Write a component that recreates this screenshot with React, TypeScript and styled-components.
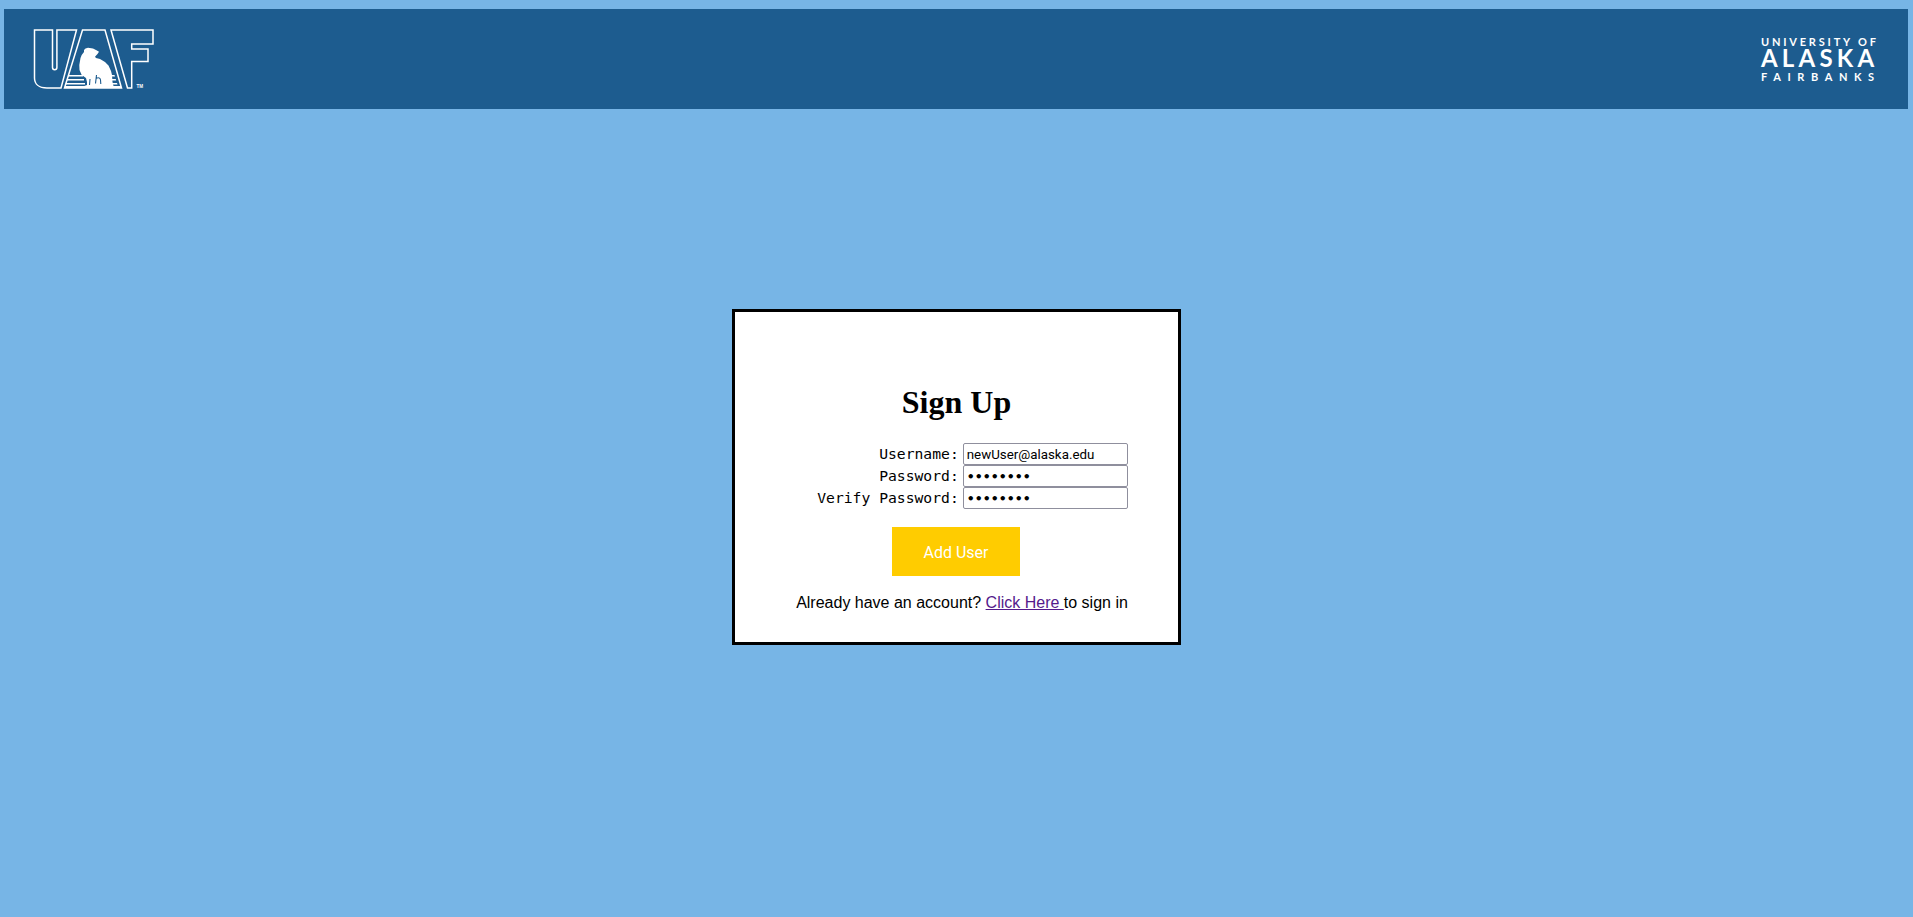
import styled, { createGlobalStyle } from "styled-components";

const GlobalStyle = createGlobalStyle`
	html, body {
		margin: 0;
		padding: 0;
		background-color: #77b5e6;
	}
	body {
		padding: 9px 5px 0 4px;
		min-height: 908px;
		font-family: "Liberation Sans", Arial, sans-serif;
	}
`;

const Header = styled.header`
	height: 100px;
	background-color: #1d5c8f;
	display: flex;
	align-items: center;
	justify-content: space-between;
	padding: 0 31px 0 30px;
`;

const UafLogo = styled.svg`
	width: 130px;
	height: 58px;
	display: block;
	flex: none;
	overflow: visible;
`;

const AlaskaLogo = styled.div`
	width: 116px;
	display: flex;
	flex-direction: column;
	color: #ffffff;
	font-family: Lato, "Open Sans", sans-serif;
	white-space: nowrap;
`;

const LogoSmallLine = styled.span<{ $spacing: number }>`
	font-size: 11px;
	line-height: 13px;
	font-weight: 700;
	letter-spacing: ${(p) => p.$spacing}px;
`;

const LogoBigLine = styled.span`
	font-size: 24px;
	line-height: 20px;
	font-weight: 700;
	letter-spacing: 4.2px;
	margin-bottom: 2px;
`;

const Main = styled.main`
	display: flex;
	justify-content: center;
	padding-top: 200px;
`;

const Card = styled.section`
	width: 449px;
	height: 336px;
	box-sizing: border-box;
	border: 3px solid #000000;
	background-color: #ffffff;
	padding-top: 72px;
	display: flex;
	flex-direction: column;
	align-items: center;
`;

const Title = styled.h1`
	margin: 0 0 22px 1px;
	font-family: "Liberation Serif", "Times New Roman", serif;
	font-size: 32px;
	line-height: 37px;
	font-weight: 700;
	color: #000000;
`;

const FormGrid = styled.form`
	display: grid;
	grid-template-columns: auto 165px;
	grid-auto-rows: 22px;
	column-gap: 4px;
	align-items: center;
	margin-left: 33px;
`;

const FieldLabel = styled.label`
	font-family: "DejaVu Sans Mono", "Liberation Mono", monospace;
	font-size: 14.7px;
	line-height: 20px;
	padding-bottom: 1px;
	color: #000000;
	text-align: right;
	white-space: pre;
`;

const FieldInput = styled.input`
	width: 165px;
	height: 22px;
	box-sizing: border-box;
	border: 1px solid #8f8f9d;
	border-radius: 2px;
	padding: 0 3px;
	margin: 0;
	background-color: #ffffff;
	color: #000000;
	font-family: Roboto, Arial, sans-serif;
	font-size: 13.33px;
	outline: none;

	&[type="password"] {
		font-family: "DejaVu Sans", sans-serif;
		font-size: 12.5px;
		font-weight: 700;
	}
`;

const SubmitButton = styled.button`
	width: 128px;
	height: 49px;
	margin-top: 18px;
	border: none;
	padding: 1px 0 0;
	background-color: #ffcc00;
	color: #ffffff;
	font-family: Roboto, sans-serif;
	font-size: 16px;
`;

const FooterText = styled.p`
	margin: 18px 0 0 12px;
	font-size: 16px;
	line-height: 18px;
	color: #000000;
	white-space: pre;
`;

const VisitedLink = styled.a`
	color: #551a8b;
	text-decoration: underline;
`;

function BearMark() {
	return (
		<UafLogo viewBox="0 0 130 58" aria-label="UAF">
			<g transform="translate(-34 -30)">
				<g fill="none" stroke="#ffffff" strokeWidth="1.5" strokeLinejoin="miter">
					<path d="M34.5 30H52.5V67.5a2.2 2.2 0 0 0 4.4 0V30H76.5L61 88H47C39 88 34.5 84 34.5 78Z" />
					<path d="M82.5 30H105L121.5 88H64.5Z" />
					<path d="M111 30H153V44H131.7V49H148V61.5H131.7V88H127.5Z" />
				</g>
				<g fill="#ffffff">
					<path d="M68.5 75H83V76.6H68ZM67.3 79H84V80.6H66.8ZM66 83H85V84.6H65.6Z" />
					<path d="M110 75H114.5L115 76.6H110ZM110 79H115.7L116.2 80.6H110ZM110 83H117L117.5 84.6H110Z" />
					<path d="M65 86H121V88H65Z" />
					<path d="M84 50 85.5 48.5 88 47.7 93 48.5 96 50 99 51.7 97.5 54 95 56.7 96 58 100 59 105 62 108.5 65.5 111 71 112 75 112.5 82 114 88H80L83 86.5 87 85 87 82 86 78 81.7 75 79.5 70 79.3 65 80.5 58 81.7 55 84 52Z" />
				</g>
				<path d="M96.5 75 95.5 83.5M96 78.5C98.5 77 100.5 78 100.5 80L100.8 84M90 79 89.5 85" fill="none" stroke="#1d5c8f" strokeWidth="1.1" />
				<text x="136.5" y="88" fill="#ffffff" fontFamily="Liberation Sans, sans-serif" fontSize="4.6" fontWeight="700">TM</text>
			</g>
		</UafLogo>
	);
}

export default function App() {
	return (
		<>
			<GlobalStyle />
			<Header>
				<BearMark />
				<AlaskaLogo>
					<LogoSmallLine $spacing={2.8}>UNIVERSITY OF</LogoSmallLine>
					<LogoBigLine>ALASKA</LogoBigLine>
					<LogoSmallLine $spacing={6.6}>FAIRBANKS</LogoSmallLine>
				</AlaskaLogo>
			</Header>
			<Main>
				<Card>
					<Title>Sign Up</Title>
					<FormGrid>
						<FieldLabel htmlFor="username">Username:</FieldLabel>
						<FieldInput id="username" type="text" readOnly value="newUser@alaska.edu" />
						<FieldLabel htmlFor="password">Password:</FieldLabel>
						<FieldInput id="password" type="password" readOnly value="password" />
						<FieldLabel htmlFor="verify">Verify Password:</FieldLabel>
						<FieldInput id="verify" type="password" readOnly value="password" />
					</FormGrid>
					<SubmitButton type="button">Add User</SubmitButton>
					<FooterText>
						Already have an account? <VisitedLink href="#">Click Here </VisitedLink>to sign in
					</FooterText>
				</Card>
			</Main>
		</>
	);
}
